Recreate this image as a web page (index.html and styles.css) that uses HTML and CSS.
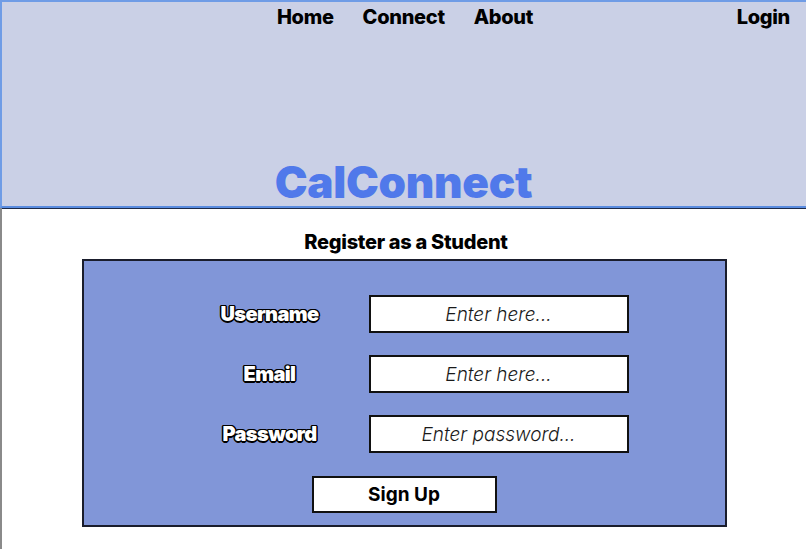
FILE: index.html
```html
<!DOCTYPE html>
<html lang="en">
<head>
<meta charset="utf-8">
<title>CalConnect</title>
<link rel="stylesheet" href="styles.css">
</head>
<body>
<header class="site-header">
  <nav class="topnav">
    <div class="nav-spacer"></div>
    <div class="nav-links">
      <a href="#">Home</a>
      <a href="#">Connect</a>
      <a href="#">About</a>
    </div>
    <a class="login" href="#">Login</a>
  </nav>
  <h1 class="brand">CalConnect</h1>
</header>
<main class="page">
  <h2 class="form-title">Register as a Student</h2>
  <form class="register">
    <div class="fields">
      <label class="field-label" for="u">Username</label>
      <input class="field-input" id="u" type="text" placeholder="Enter here...">
      <label class="field-label" for="e">Email</label>
      <input class="field-input" id="e" type="text" placeholder="Enter here...">
      <label class="field-label" for="p">Password</label>
      <input class="field-input" id="p" type="password" placeholder="Enter password...">
    </div>
    <button class="signup" type="button">Sign Up</button>
  </form>
</main>
</body>
</html>
```

FILE: styles.css
```css
* { box-sizing: border-box; }
html, body { margin: 0; padding: 0; background: #fff; }
body { font-family: Inter, "Liberation Sans", sans-serif; color: #000; }

.site-header {
  height: 208px;
  background: #cad0e6;
  border-top: 2px solid #6f9ce6;
  border-left: 2px solid #6f9ce6;
  border-bottom: 2px solid #5a8ce0;
  box-shadow: 0 1px 0 #1d2a48;
  display: flex;
  flex-direction: column;
  justify-content: space-between;
}
.topnav {
  display: grid;
  grid-template-columns: 1fr auto 1fr;
  align-items: center;
  padding: 3px 16px 0 18px;
}
.nav-links { display: flex; gap: 29px; }
.topnav a {
  color: #000;
  text-decoration: none;
  font-weight: 800;
  font-size: 20px;
  letter-spacing: -0.3px;
}
.login { justify-self: end; }

.brand {
  margin: 0 0 2px;
  text-align: center;
  color: #5079ea;
  font-size: 44px;
  font-weight: 900;
  line-height: 44px;
  letter-spacing: -0.3px;
  padding-right: 1px;
}

.page {
  border-left: 2px solid #8a8a8a;
  height: 341px;
  padding-top: 22px;
  display: flex;
  flex-direction: column;
  align-items: center;
}
.form-title {
  margin: 0 0 5px;
  font-size: 20px;
  font-weight: 800;
  line-height: 24px;
  letter-spacing: -0.3px;
  padding-left: 4px;
}
.register {
  width: 645px;
  height: 268px;
  background: #8196d8;
  border: 2px solid #1a1d2c;
  padding: 34px 0 0;
  display: flex;
  flex-direction: column;
  align-items: center;
}
.fields {
  display: grid;
  grid-template-columns: 198px 260px;
  row-gap: 22px;
  align-items: center;
  margin-right: 9px;
}
.field-label {
  text-align: center;
  color: #fff;
  font-weight: 900;
  font-size: 20px;
  letter-spacing: -0.6px;
  text-shadow:
    -1.5px 0 0 #000, 1.5px 0 0 #000, 0 -1.5px 0 #000, 0 1.5px 0 #000,
    -1px -1px 0 #000, 1px -1px 0 #000, -1px 1px 0 #000, 1px 1px 0 #000;
}
.field-input {
  width: 260px;
  height: 38px;
  border: 2px solid #111;
  background: #fff;
  font-family: Inter, "Liberation Sans", sans-serif;
  font-size: 19px;
  font-style: italic;
  font-weight: 300;
  text-align: center;
  padding: 0 8px;
  outline: none;
}
.field-input::placeholder { color: #1a1a1a; opacity: 1; }
.signup {
  margin-top: 23px;
  width: 185px;
  height: 37px;
  background: #fff;
  border: 2px solid #111;
  font-family: Inter, "Liberation Sans", sans-serif;
  font-weight: 700;
  font-size: 19px;
  color: #000;
  padding: 0;
}
```
